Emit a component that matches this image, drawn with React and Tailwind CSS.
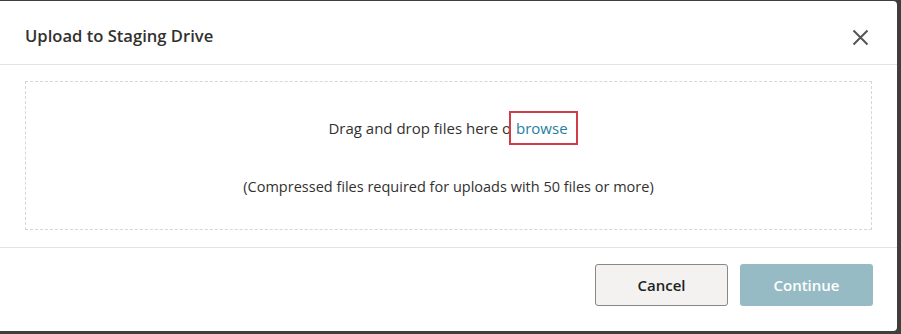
export default function App() {
  return (
    <div className="w-[901px] h-[334px] bg-[#3f3e3b] pt-[1px] pr-[4px] pb-[3px] font-['Open_Sans',sans-serif]">
      <div className="h-full bg-white rounded-r-[4px] flex flex-col">
        {/* Header */}
        <div className="h-[64px] shrink-0 border-b border-[#e3e3e3] flex items-center justify-between pl-[25px] pr-[28px]">
          <h2 className="text-[16.6px] font-semibold text-[#323130] pt-[8px]">Upload to Staging Drive</h2>
          <button className="text-[#555] mt-[10px]" aria-label="Close">
            <svg width="17" height="17" viewBox="0 0 17 17" fill="none" stroke="currentColor" strokeWidth="2">
              <path d="M1.5 1.5 L15.5 15.5 M15.5 1.5 L1.5 15.5" />
            </svg>
          </button>
        </div>

        {/* Drop zone */}
        <div className="px-[25px] pt-[16px] pb-[17px] border-b border-[#e3e3e3]">
          <div className="h-[149px] border border-dashed border-[#d6d6d6] flex flex-col items-center text-[#323130]">
            <p className="mt-[29px] pl-[9px] leading-[34px] text-[15px]">
              Drag and drop files here o
              <span className="inline-block border-2 border-[#cf3d48] pl-[5px] pr-[8px] leading-[30px] -ml-[2px] text-[#1f7ea1]">
                browse
              </span>
            </p>
            <p className="mt-[32px] leading-[20px] text-[14.5px]">(Compressed files required for uploads with 50 files or more)</p>
          </div>
        </div>

        {/* Footer */}
        <div className="flex justify-end gap-[12px] pt-[16px] pr-[24px]">
          <button className="w-[133px] h-[42px] rounded-[3px] border border-[#8a8886] bg-[#f3f2f1] text-[15px] font-semibold text-[#201f1e]">
            Cancel
          </button>
          <button className="w-[133px] h-[42px] rounded-[3px] bg-[#96bbc5] text-[15px] font-semibold text-white">
            Continue
          </button>
        </div>
      </div>
    </div>
  )
}
